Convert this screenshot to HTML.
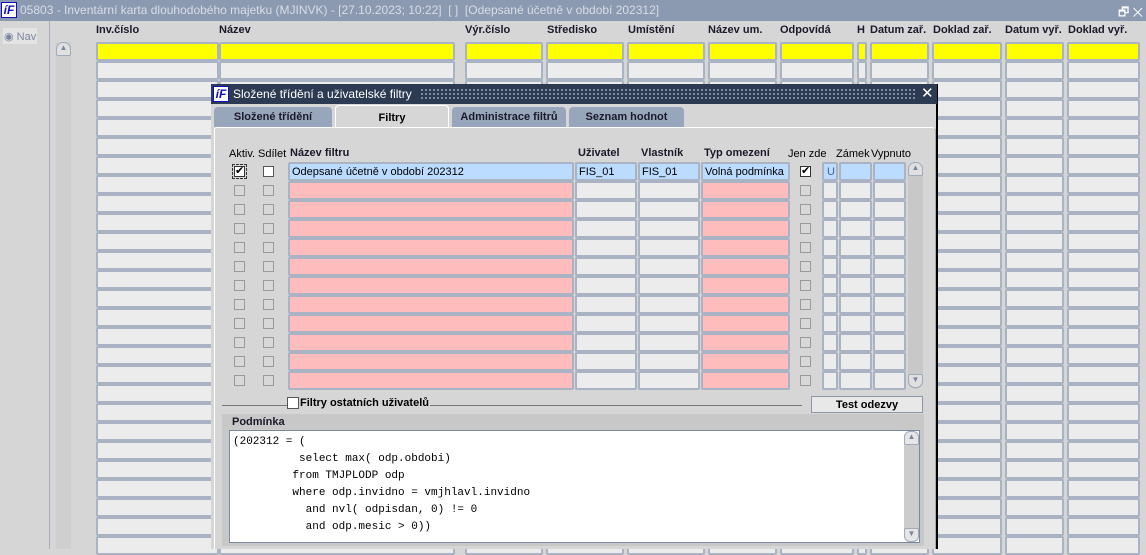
<!DOCTYPE html>
<html><head><meta charset="utf-8"><style>
*{box-sizing:border-box;margin:0;padding:0}
body{width:1146px;height:549px;overflow:hidden;background:#d6d6d6;font-family:"Liberation Sans",sans-serif;font-size:11px;position:relative;color:#000}
.a{position:absolute}
.f{position:absolute;border:2px solid #a9b3c4;background:#ececec;border-radius:2px}
.y{background:#ffff00}
.h{position:absolute;font-weight:bold;font-size:11px;color:#1a1a2a}
.cb{position:absolute;width:11px;height:11px;border:1px solid #9a9a9a;background:#d8d8d8}
.logo{position:absolute;width:16px;height:16px;background:#fff;border:1px solid #1010c0;color:#1010c0;font:bold italic 12px "Liberation Sans";line-height:14px;text-align:center}
</style></head><body>
<div class="a" style="left:0;top:0;width:1146px;height:21px;background:#8b9ab0"></div>
<div class="logo" style="left:1px;top:2px">íF</div>
<div class="a" style="left:20px;top:3px;color:#d8dde6;font-size:12px;white-space:nowrap">05803 - Inventární karta dlouhodobého majetku (MJINVK) - [27.10.2023; 10:22]&nbsp; [ ]&nbsp; [Odepsané účetně v období 202312]</div>
<div class="a" style="left:1118px;top:3px;color:#fff;font-size:12px">🗗 ✕</div>
<div class="a" style="left:0;top:21px;width:50px;height:528px;border-right:1px solid #aab;background:#d6d6d6"></div>
<div class="a" style="left:3px;top:28px;width:34px;height:16px;background:#e4e4e4;color:#7a86a0;font-size:11px;padding:2px 0 0 1px;white-space:nowrap;overflow:hidden">◉ Nav</div>
<div class="a" style="left:56px;top:42px;width:15px;height:507px;background:#cfcfcf"></div>
<div class="a" style="left:56px;top:42px;width:15px;height:14px;border:1px solid #a0aabb;border-radius:7px 7px 2px 2px;background:#e0e0e0;color:#7a86a0;font-size:8px;text-align:center">▲</div>
<div id="g"></div>
<div class="h" style="left:96px;top:24px">Inv.číslo</div>
<div class="h" style="left:219px;top:24px">Název</div>
<div class="h" style="left:465px;top:24px">Výr.číslo</div>
<div class="h" style="left:547px;top:24px">Středisko</div>
<div class="h" style="left:628px;top:24px">Umístění</div>
<div class="h" style="left:708px;top:24px">Název um.</div>
<div class="h" style="left:780px;top:24px">Odpovídá</div>
<div class="h" style="left:857px;top:24px">H</div>
<div class="h" style="left:870px;top:24px">Datum zař.</div>
<div class="h" style="left:933px;top:24px">Doklad zař.</div>
<div class="h" style="left:1005px;top:24px">Datum vyř.</div>
<div class="h" style="left:1068px;top:24px">Doklad vyř.</div>

<div class="a" style="left:211px;top:84px;width:727px;height:465px;background:#d6d6d6;border-right:2px solid #000"></div>
<div class="a" style="left:211px;top:84px;width:726px;height:20px;background:#2c3a52"></div>
<div class="a" style="left:420px;top:88px;width:496px;height:12px;background-image:radial-gradient(#9aa6b8 0.8px,transparent 1px);background-size:4px 4px"></div>
<div class="logo" style="left:213px;top:86px">íF</div>
<div class="a" style="left:233px;top:87px;color:#fff;font-size:12px">Složené třídění a uživatelské filtry</div>
<div class="a" style="left:921px;top:84px;color:#fff;font-size:15px">✕</div>
<div class="a" style="left:214px;top:107px;width:118px;height:20px;background:#98a6bb;border-radius:4px 4px 0 0;font-weight:bold;text-align:center;padding-top:4px;color:#1a1a2a">Složené třídění</div>
<div class="a" style="left:335px;top:105px;width:114px;height:23px;background:#d6d6d6;border:1px solid #fff;border-bottom:none;border-radius:4px 4px 0 0;font-weight:bold;text-align:center;padding-top:6px">Filtry</div>
<div class="a" style="left:452px;top:107px;width:114px;height:20px;background:#98a6bb;border-radius:4px 4px 0 0;font-weight:bold;text-align:center;padding-top:4px;color:#1a1a2a">Administrace filtrů</div>
<div class="a" style="left:569px;top:107px;width:115px;height:20px;background:#98a6bb;border-radius:4px 4px 0 0;font-weight:bold;text-align:center;padding-top:4px;color:#1a1a2a">Seznam hodnot</div>
<div class="a" style="left:214px;top:127px;width:722px;height:422px;border-top:1px solid #fff;border-left:1px solid #fff;border-radius:3px 4px 0 0;border-right:1px solid #aaa"></div>
<div class="a" style="left:229px;top:148px">Aktiv.</div>
<div class="a" style="left:258px;top:148px">Sdílet</div>
<div class="h" style="left:290px;top:147px">Název filtru</div>
<div class="h" style="left:578px;top:147px">Uživatel</div>
<div class="h" style="left:641px;top:147px">Vlastník</div>
<div class="h" style="left:704px;top:147px">Typ omezení</div>
<div class="a" style="left:788px;top:148px">Jen zde</div>
<div class="a" style="left:836px;top:148px">Zámek</div>
<div class="a" style="left:871px;top:148px">Vypnuto</div>
<div id="d"></div>
<div class="a" style="left:908px;top:162px;width:15px;height:227px;background:#c8c8c8;border-radius:7px"></div>
<div class="a" style="left:908px;top:162px;width:15px;height:14px;border:1px solid #a0aabb;border-radius:7px 7px 2px 2px;background:#e0e0e0;color:#7a86a0;font-size:8px;text-align:center">▲</div>
<div class="a" style="left:908px;top:374px;width:15px;height:14px;border:1px solid #a0aabb;border-radius:2px 2px 7px 7px;background:#e0e0e0;color:#7a86a0;font-size:8px;text-align:center">▼</div>
<div class="a" style="left:222px;top:405px;width:580px;height:1px;background:#777"></div>
<div class="a" style="left:287px;top:397px;width:12px;height:12px;border:1px solid #555;background:#fff"></div>
<div class="a" style="left:299px;top:397px;background:#d6d6d6;font-weight:bold;padding:0 1px">Filtry ostatních uživatelů</div>
<div class="a" style="left:811px;top:396px;width:112px;height:17px;border:1px solid #8c98aa;background:#e8e8e8;font-weight:bold;text-align:center;padding-top:2px">Test odezvy</div>
<div class="a" style="left:222px;top:414px;width:702px;height:132px;background:#c8c8c8"></div>
<div class="h" style="left:232px;top:416px">Podmínka</div>
<div class="a" style="left:229px;top:430px;width:691px;height:113px;background:#fff;border:1px solid #7a8aa0"></div>
<pre class="a" style="left:233px;top:434px;font-family:'Liberation Mono',monospace;font-size:11px;line-height:17px">(202312 = (
          select max( odp.obdobi)
         from TMJPLODP odp
         where odp.invidno = vmjhlavl.invidno
           and nvl( odpisdan, 0) != 0
           and odp.mesic &gt; 0))</pre>
<div class="a" style="left:904px;top:431px;width:15px;height:111px;background:#ccc;border-radius:6px"></div>
<div class="a" style="left:904px;top:431px;width:15px;height:14px;border:1px solid #a0aabb;background:#e6e6e6;border-radius:6px 6px 2px 2px;color:#7a86a0;font-size:8px;text-align:center">▲</div>
<div class="a" style="left:904px;top:528px;width:15px;height:14px;border:1px solid #a0aabb;background:#e6e6e6;border-radius:2px 2px 6px 6px;color:#7a86a0;font-size:8px;text-align:center">▼</div>
<script>
var g='',cols=[[96,123],[219,236],[465,78],[546,78],[627,78],[708,69],[780,74],[857,10],[870,59],[932,70],[1005,59],[1067,73]];
for(var r=0;r<27;r++){var y=42+r*19;cols.forEach(function(c){g+='<div class="f'+(r==0?' y':'')+'" style="left:'+c[0]+'px;top:'+y+'px;width:'+c[1]+'px;height:19px"></div>'})}
document.getElementById('g').innerHTML=g;
var d='';
for(var r=0;r<12;r++){var y=162+r*19,s=r==0;
d+='<div class="cb" style="left:234px;top:'+(y+4)+'px;'+(s?'background:#fff;border-color:#333;outline:1px dashed #333;outline-offset:1px':'')+'">'+(s?'<span style="position:absolute;left:0;top:-3px;font-size:11px">✔</span>':'')+'</div>';
d+='<div class="cb" style="left:263px;top:'+(y+4)+'px;'+(s?'background:#fff;border-color:#555':'')+'"></div>';
var bg=s?'#bcdcff':'#ffbcbc',gb=s?'#bcdcff':'#ececec';
d+='<div class="f" style="left:288px;top:'+y+'px;width:286px;height:19px;background:'+bg+';padding:2px 2px">'+(s?'Odepsané účetně v období 202312':'')+'</div>';
d+='<div class="f" style="left:575px;top:'+y+'px;width:62px;height:19px;background:'+gb+';padding:2px 2px">'+(s?'FIS_01':'')+'</div>';
d+='<div class="f" style="left:638px;top:'+y+'px;width:62px;height:19px;background:'+gb+';padding:2px 2px">'+(s?'FIS_01':'')+'</div>';
d+='<div class="f" style="left:701px;top:'+y+'px;width:89px;height:19px;background:'+bg+';padding:2px 2px">'+(s?'Volná podmínka':'')+'</div>';
d+='<div class="cb" style="left:800px;top:'+(y+4)+'px;'+(s?'background:#fff;border-color:#333':'')+'">'+(s?'<span style="position:absolute;left:0;top:-3px;font-size:11px">✔</span>':'')+'</div>';
d+='<div class="f" style="left:822px;top:'+y+'px;width:16px;height:19px;background:'+gb+';color:#4060a0;padding:2px 3px">'+(s?'U':'')+'</div>';
d+='<div class="f" style="left:839px;top:'+y+'px;width:33px;height:19px;background:'+gb+'"></div>';
d+='<div class="f" style="left:873px;top:'+y+'px;width:33px;height:19px;background:'+gb+'"></div>';}
document.getElementById('d').innerHTML=d;
</script>
</body></html>
